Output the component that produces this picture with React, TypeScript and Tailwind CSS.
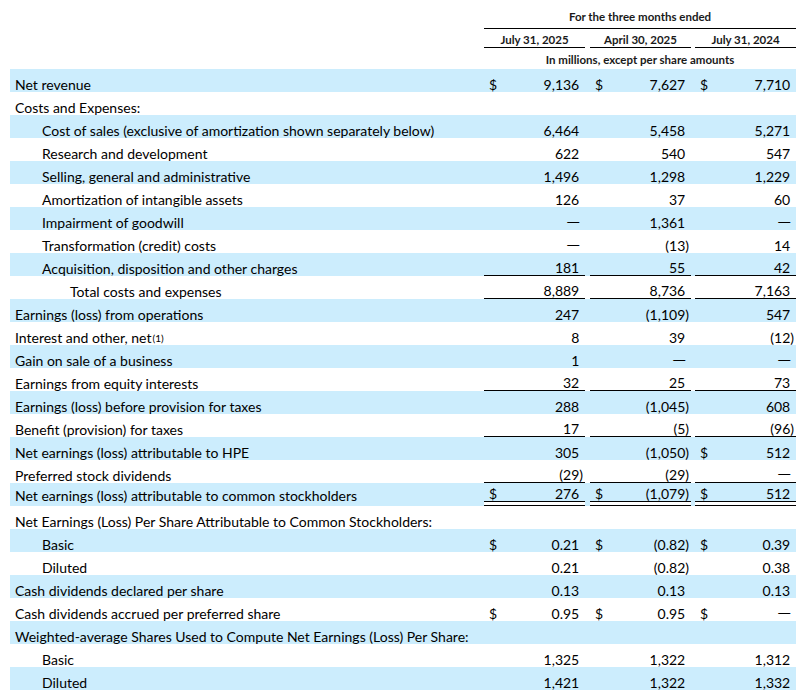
import React from "react";

type Row = {
  label: string;
  indent?: 0 | 1 | 2;
  vals?: [string, string, string];
  dollars?: [boolean, boolean, boolean];
  line?: "single" | "double";
  sup?: string;
};

const rows: Row[] = [
  { label: "Net revenue", vals: ["9,136", "7,627", "7,710"], dollars: [true, true, true] },
  { label: "Costs and Expenses:" },
  { label: "Cost of sales (exclusive of amortization shown separately below)", indent: 1, vals: ["6,464", "5,458", "5,271"] },
  { label: "Research and development", indent: 1, vals: ["622", "540", "547"] },
  { label: "Selling, general and administrative", indent: 1, vals: ["1,496", "1,298", "1,229"] },
  { label: "Amortization of intangible assets", indent: 1, vals: ["126", "37", "60"] },
  { label: "Impairment of goodwill", indent: 1, vals: ["—", "1,361", "—"] },
  { label: "Transformation (credit) costs", indent: 1, vals: ["—", "(13)", "14"] },
  { label: "Acquisition, disposition and other charges", indent: 1, vals: ["181", "55", "42"], line: "single" },
  { label: "Total costs and expenses", indent: 2, vals: ["8,889", "8,736", "7,163"], line: "single" },
  { label: "Earnings (loss) from operations", vals: ["247", "(1,109)", "547"] },
  { label: "Interest and other, net", sup: "(1)", vals: ["8", "39", "(12)"] },
  { label: "Gain on sale of a business", vals: ["1", "—", "—"] },
  { label: "Earnings from equity interests", vals: ["32", "25", "73"], line: "single" },
  { label: "Earnings (loss) before provision for taxes", vals: ["288", "(1,045)", "608"] },
  { label: "Benefit (provision) for taxes", vals: ["17", "(5)", "(96)"], line: "single" },
  { label: "Net earnings (loss) attributable to HPE", vals: ["305", "(1,050)", "512"], dollars: [false, false, true] },
  { label: "Preferred stock dividends", vals: ["(29)", "(29)", "—"], line: "single" },
  { label: "Net earnings (loss) attributable to common stockholders", vals: ["276", "(1,079)", "512"], dollars: [true, true, true], line: "double" },
  { label: "Net Earnings (Loss) Per Share Attributable to Common Stockholders:" },
  { label: "Basic", indent: 1, vals: ["0.21", "(0.82)", "0.39"], dollars: [true, true, true] },
  { label: "Diluted", indent: 1, vals: ["0.21", "(0.82)", "0.38"] },
  { label: "Cash dividends declared per share", vals: ["0.13", "0.13", "0.13"] },
  { label: "Cash dividends accrued per preferred share", vals: ["0.95", "0.95", "—"], dollars: [true, true, true] },
  { label: "Weighted-average Shares Used to Compute Net Earnings (Loss) Per Share:" },
  { label: "Basic", indent: 1, vals: ["1,325", "1,322", "1,312"] },
  { label: "Diluted", indent: 1, vals: ["1,421", "1,322", "1,332"] },
];

function Num({ v }: { v: string }) {
  if (v === "—") {
    return (
      <span>
        <span className="font-['Liberation_Sans'] text-[12px]">—</span>
        <span className="invisible">)</span>
      </span>
    );
  }
  const neg = v.endsWith(")");
  return (
    <span>
      {v}
      {!neg && <span className="invisible">)</span>}
    </span>
  );
}

function Cell({ v, dollar, line }: { v: string; dollar: boolean; line?: "single" | "double" }) {
  if (line === "double") {
    return (
      <div className="w-[101px] h-full flex flex-col">
        <div className="flex-1 flex items-end justify-between pl-[5px] pr-[2px] border-b border-black">
          <span>{dollar ? "$" : ""}</span>
          <Num v={v} />
        </div>
        <div className="h-[3px] bg-white border-b border-black box-content" />
      </div>
    );
  }
  return (
    <div
      className={`w-[101px] h-full flex items-end justify-between pl-[5px] pr-[2px] ${
        line === "single" ? "border-b border-black" : ""
      }`}
    >
      <span>{dollar ? "$" : ""}</span>
      <Num v={v} />
    </div>
  );
}

export default function App() {
  return (
    <div
      className="w-[803px] h-[698px] bg-white text-black text-[14px] leading-[15px]"
      style={{ fontFamily: "Lato, 'Liberation Sans', sans-serif" }}
    >
      {/* header */}
      <div className="ml-[484px] w-[312px] h-[69px] flex flex-col text-[11.5px] leading-[14px] font-bold text-[#1a1a1a]">
        <div className="h-[29px] flex items-end justify-center pb-[4px] border-b border-black">
          For the three months ended
        </div>
        <div className="h-[19px] flex">
          <div className="w-[101px] flex items-end justify-center pb-0 border-b border-black">July 31, 2025</div>
          <div className="w-[5px]" />
          <div className="w-[101px] flex items-end justify-center pb-0 border-b border-black">April 30, 2025</div>
          <div className="w-[4px]" />
          <div className="w-[101px] flex items-end justify-center pb-0 border-b border-black">July 31, 2024</div>
        </div>
        <div className="h-[21px] flex items-center justify-center pt-[2px]">In millions, except per share amounts</div>
      </div>
      {/* body */}
      <div className="ml-[10px] w-[786px] flex flex-col">
        {rows.map((r, i) => (
          <div key={i} className={`h-[23px] flex ${i % 2 === 0 ? "bg-[#ccedfd]" : "bg-white"}`}>
            <div
              className={`w-[474px] flex items-end whitespace-nowrap ${
                r.indent === 2 ? "pl-[60px]" : r.indent === 1 ? "pl-[32px]" : "pl-[5px]"
              } ${r.line === "double" ? "pb-[3px]" : ""}`}
            >
              <span>
                {r.label}
                {r.sup && <sup className="text-[10px] relative top-[-1px] ml-[1px]">{r.sup}</sup>}
              </span>
            </div>
            {r.vals && (
              <>
                <Cell v={r.vals[0]} dollar={!!r.dollars?.[0]} line={r.line} />
                <div className="w-[5px]" />
                <Cell v={r.vals[1]} dollar={!!r.dollars?.[1]} line={r.line} />
                <div className="w-[4px]" />
                <Cell v={r.vals[2]} dollar={!!r.dollars?.[2]} line={r.line} />
              </>
            )}
          </div>
        ))}
      </div>
    </div>
  );
}
